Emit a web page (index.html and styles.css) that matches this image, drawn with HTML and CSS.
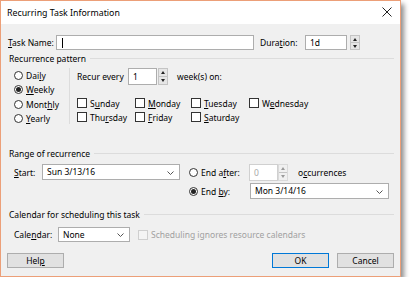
FILE: index.html
```html
<!DOCTYPE html>
<html lang="en">

<head>
    <meta charset="UTF-8">
    <title>Recurring Task Information</title>
    <link rel="stylesheet" href="styles.css">
</head>

<body>

    <div class="window">
        <div class="titlebar">
            <span class="title">Recurring Task Information</span>
            <svg class="close" width="10" height="10" viewBox="0 0 10 10">
                <path d="M0.5 0.5 L9.5 9.5 M9.5 0.5 L0.5 9.5" stroke="#222" stroke-width="1" fill="none" />
            </svg>
        </div>

        <div class="content">
            <div class="task-row">
                <label class="lbl task-lbl"><u>T</u>ask Name:</label>
                <div class="field task-name"><span class="caret"></span></div>
                <label class="lbl duration-lbl">Dura<u>t</u>ion:</label>
                <div class="field duration">1d</div>
                <div class="spin"><span class="up"></span><span class="down"></span></div>
            </div>

            <div class="group-head"><span>Recurrence pattern</span></div>

            <div class="pattern">
                <div class="freq">
                    <div class="opt"><span class="radio"></span><span>Dai<u>l</u>y</span></div>
                    <div class="opt"><span class="radio on"></span><span><u>W</u>eekly</span></div>
                    <div class="opt"><span class="radio"></span><span>Mont<u>h</u>ly</span></div>
                    <div class="opt"><span class="radio"></span><span><u>Y</u>early</span></div>
                </div>
                <div class="vsep"></div>
                <div class="weekly">
                    <div class="recur-row">
                        <span class="recur-lbl">Recur every</span>
                        <div class="field recur">1</div>
                        <div class="spin tall"><span class="up"></span><span class="down"></span></div>
                        <span class="weeks">week(s) on:</span>
                    </div>
                    <div class="days">
                        <div class="opt"><span class="check"></span><span>S<u>u</u>nday</span></div>
                        <div class="opt"><span class="check"></span><span><u>M</u>onday</span></div>
                        <div class="opt"><span class="check"></span><span><u>T</u>uesday</span></div>
                        <div class="opt"><span class="check"></span><span>W<u>e</u>dnesday</span></div>
                        <div class="opt"><span class="check"></span><span>Thu<u>r</u>sday</span></div>
                        <div class="opt"><span class="check"></span><span><u>F</u>riday</span></div>
                        <div class="opt"><span class="check"></span><span><u>S</u>aturday</span></div>
                    </div>
                </div>
            </div>

            <div class="group-head range-head"><span>Range of recurrence</span></div>

            <div class="range">
                <div class="range-row">
                    <label class="lbl start-lbl"><u>S</u>tart:</label>
                    <div class="field combo start">Sun 3/13/16
                        <svg class="chev" width="7" height="4" viewBox="0 0 7 4"><path d="M0.5 0.5 L3.5 3.5 L6.5 0.5" stroke="#555" fill="none" /></svg>
                    </div>
                    <div class="opt end-opt"><span class="radio"></span><span>End a<u>f</u>ter:</span></div>
                    <div class="field count off">0</div>
                    <div class="spin off"><span class="up"></span><span class="down"></span></div>
                    <span class="occ">o<u>c</u>currences</span>
                </div>
                <div class="range-row second">
                    <div class="opt end-opt"><span class="radio on"></span><span>End <u>b</u>y:</span></div>
                    <div class="field combo end">Mon 3/14/16
                        <svg class="chev" width="7" height="4" viewBox="0 0 7 4"><path d="M0.5 0.5 L3.5 3.5 L6.5 0.5" stroke="#555" fill="none" /></svg>
                    </div>
                </div>
            </div>

            <div class="group-head cal-head"><span>Calendar for scheduling this task</span></div>

            <div class="cal-row">
                <label class="lbl cal-lbl">Cale<u>n</u>dar:</label>
                <div class="field combo cal">None
                    <svg class="chev" width="7" height="4" viewBox="0 0 7 4"><path d="M0.5 0.5 L3.5 3.5 L6.5 0.5" stroke="#555" fill="none" /></svg>
                </div>
                <div class="opt disabled"><span class="check"></span><span>Scheduling ignores resource calendars</span></div>
            </div>

            <div class="buttons">
                <button class="btn">Hel<u>p</u></button>
                <span class="spacer"></span>
                <button class="btn default">OK</button>
                <button class="btn">Cancel</button>
            </div>
        </div>
    </div>

</body>

</html>
```

FILE: styles.css
```css
body {
    margin: 0;
    background-color: #fff;
    font-family: 'Noto Sans', sans-serif;
    font-size: 8.5px;
    color: #000;
}

u {
    text-decoration: underline;
    text-underline-offset: 1px;
}

.window {
    width: 399px;
    height: 275px;
    border: 1px solid #ec9f78;
    background-color: #f0f0f0;
    box-shadow: 3px 4px 5px rgba(0, 0, 0, 0.45);
    display: flex;
    flex-direction: column;
}

.titlebar {
    height: 23px;
    background-color: #fff;
    display: flex;
    align-items: center;
    padding: 0 8px 0 6px;
    flex-shrink: 0;
}

.title {
    font-size: 8.8px;
    flex: 1;
}

.close {
    margin-top: -1px;
}

.content {
    padding: 11px 6px 0 7px;
    display: flex;
    flex-direction: column;
}

.lbl {
    white-space: nowrap;
    flex-shrink: 0;
}

.field {
    background-color: #fff;
    border: 1px solid #adadad;
    box-sizing: border-box;
    height: 15px;
    line-height: 13px;
    padding: 0 4px;
    white-space: nowrap;
    flex-shrink: 0;
}

.task-row {
    display: flex;
    align-items: center;
    height: 15px;
}

.task-lbl {
    width: 48px;
}

.task-name {
    width: 198px;
    display: flex;
    align-items: center;
}

.caret {
    width: 1px;
    height: 10px;
    background-color: #000;
    margin-left: 1px;
}

.duration-lbl {
    width: 45px;
    margin-left: 6px;
}

.duration {
    width: 42px;
}

.spin {
    width: 10px;
    height: 15px;
    margin-left: 3px;
    display: flex;
    flex-direction: column;
    box-sizing: border-box;
    border: 1px solid #c4c4c4;
    background-color: #e6e6e6;
    flex-shrink: 0;
}

.spin span {
    flex: 1;
    display: flex;
    align-items: center;
    justify-content: center;
}

.spin .up {
    border-bottom: 1px solid #c4c4c4;
}

.spin .up::after,
.spin .down::after {
    content: '';
    border-left: 2.5px solid transparent;
    border-right: 2.5px solid transparent;
}

.spin .up::after {
    border-bottom: 3px solid #222;
}

.spin .down::after {
    border-top: 3px solid #222;
}

.spin.tall {
    height: 17px;
    margin-left: 1px;
}

.spin.off {
    margin-left: 0;
    background-color: #f0f0f0;
    border-color: #dadada;
}

.spin.off .up::after {
    border-bottom-color: #9a9a9a;
}

.spin.off .down::after {
    border-top-color: #9a9a9a;
}

.group-head {
    display: flex;
    align-items: center;
    height: 12px;
    margin-top: 2px;
    gap: 4px;
    padding-left: 1px;
}

.group-head::after {
    content: '';
    flex: 1;
    height: 1px;
    background-color: #dcdcdc;
}

.pattern {
    display: flex;
    margin-top: 4px;
    height: 56px;
}

.freq {
    width: 55px;
    padding-left: 6px;
}

.opt {
    display: flex;
    align-items: center;
    white-space: nowrap;
    min-width: 0;
}

.freq .opt {
    height: 14.5px;
}

.radio {
    width: 9px;
    height: 9px;
    box-sizing: border-box;
    border: 1px solid #333;
    border-radius: 50%;
    background-color: #fff;
    margin-right: 3px;
    flex-shrink: 0;
    display: flex;
    align-items: center;
    justify-content: center;
}

.radio.on::after {
    content: '';
    width: 5px;
    height: 5px;
    border-radius: 50%;
    background-color: #222;
}

.check {
    width: 10px;
    height: 10px;
    box-sizing: border-box;
    border: 1px solid #333;
    background-color: #fff;
    margin-right: 3px;
    flex-shrink: 0;
}

.vsep {
    width: 1px;
    background-color: #dcdcdc;
}

.weekly {
    margin-left: 7px;
}

.recur-row {
    display: flex;
    align-items: center;
    height: 17px;
}

.recur-lbl {
    width: 51px;
    flex-shrink: 0;
}

.recur {
    width: 29px;
    height: 17px;
    line-height: 15px;
}

.weeks {
    margin-left: 9px;
}

.days {
    display: grid;
    grid-template-columns: 58px 56px 58px auto;
    grid-auto-rows: 14px;
    margin-top: 11px;
}

.range-head {
    margin-top: 23px;
}

.range-row {
    display: flex;
    align-items: center;
    height: 16px;
    margin-top: 5px;
}

.range-row.second {
    margin-top: 3px;
    padding-left: 181px;
}

.start-lbl {
    width: 34px;
    padding-left: 6px;
    box-sizing: border-box;
}

.combo {
    position: relative;
    height: 16px;
    line-height: 14px;
}

.chev {
    position: absolute;
    right: 5px;
    top: 6px;
}

.start {
    width: 138px;
}

.end-opt {
    width: 60px;
    margin-left: 9px;
    flex-shrink: 0;
}

.range-row.second .end-opt {
    width: 61px;
    margin-left: 0;
}

.count {
    width: 29px;
    height: 17px;
    line-height: 15px;
    border-color: #d0d0d0;
    color: #a8a8a8;
}

.count + .spin {
    height: 17px;
}

.occ {
    margin-left: 10px;
}

.end {
    width: 139px;
}

.cal-head {
    margin-top: 9px;
}

.cal-row {
    display: flex;
    align-items: center;
    height: 15px;
    margin-top: 7px;
    padding-left: 6px;
}

.cal-lbl {
    width: 44px;
}

.cal {
    width: 72px;
    height: 15px;
    line-height: 13px;
}

.cal .chev {
    top: 5px;
}

.disabled {
    margin-left: 8px;
    color: #a0a0a0;
}

.disabled .check {
    border-color: #cfcfcf;
    background-color: #f4f4f4;
}

.buttons {
    display: flex;
    margin-top: 11px;
    gap: 9px;
}

.spacer {
    flex: 1;
}

.btn {
    width: 57px;
    height: 15px;
    padding: 0;
    font-family: 'Noto Sans', sans-serif;
    font-size: 8.5px;
    color: #000;
    background-color: #e1e1e1;
    border: 1px solid #adadad;
    line-height: 13px;
    margin: 0 0 0 -1px;
}

.btn.default {
    border-color: #0078d7;
}
```
